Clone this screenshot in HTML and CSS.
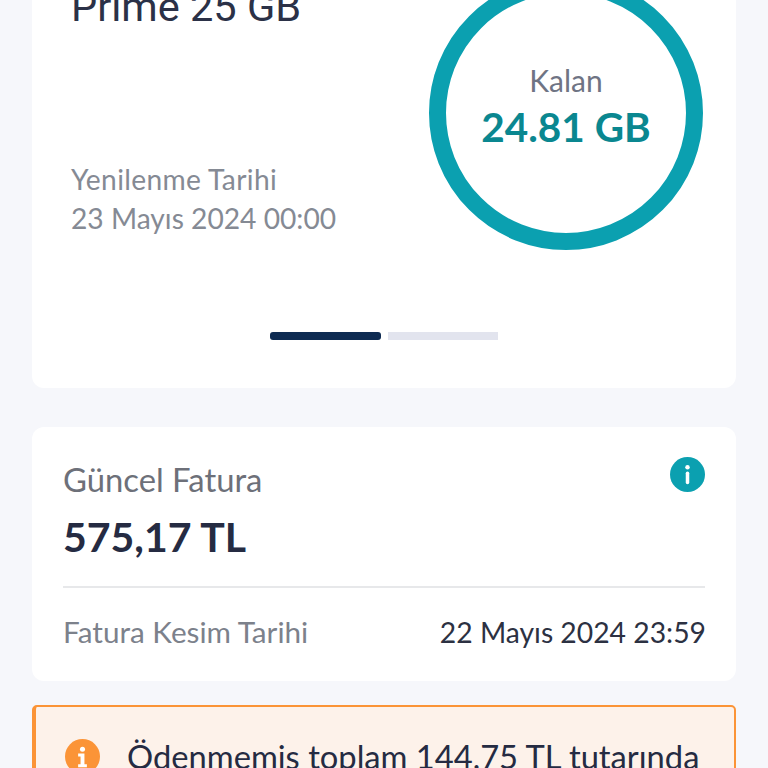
FILE: index.html
```html
<!DOCTYPE html>
<html>
<head>
	<meta charset="utf-8">
	<title>Paketim</title>
	<link rel="stylesheet" href="styles.css">
</head>
<body>
	<div class="screen">
		<div class="list">
			<!-- tarife karti -->
			<div class="card plan">
				<div class="plan-top">
					<div class="plan-info">
						<div class="plan-name">Prime 25 GB</div>
						<div class="plan-date">
							<div class="plan-date-label">Yenilenme Tarihi</div>
							<div>23 Mayıs 2024 00:00</div>
						</div>
					</div>
					<div class="ring">
						<div class="ring-label">Kalan</div>
						<div class="ring-value">24.81 GB</div>
					</div>
				</div>
				<div class="pager">
					<span class="dot active"></span>
					<span class="dot"></span>
				</div>
			</div>

			<!-- fatura karti -->
			<div class="card bill">
				<div class="bill-top">
					<div>
						<div class="bill-label">Güncel Fatura</div>
						<div class="bill-amount">575,17 TL</div>
					</div>
					<svg class="info-icon" viewBox="0 0 36 36">
						<circle cx="18" cy="18" r="18" fill="#0ba0b0"/>
						<circle cx="18" cy="10.5" r="2.3" fill="#fff"/>
						<rect x="16.2" y="15" width="3.6" height="13" rx="1.8" fill="#fff"/>
					</svg>
				</div>
				<div class="bill-row">
					<span class="bill-key">Fatura Kesim Tarihi</span>
					<span class="bill-date">22 Mayıs 2024 23:59</span>
				</div>
			</div>

			<!-- uyari -->
			<div class="alert">
				<svg class="alert-icon" viewBox="0 0 36 36">
					<circle cx="18" cy="18" r="18" fill="#fb9437"/>
					<circle cx="18" cy="10.5" r="2.6" fill="#fff"/>
					<path d="M13.5 15h6.5v11h2.5v3h-9v-3h2.5v-8h-2.5z" fill="#fff"/>
				</svg>
				<div class="alert-text">Ödenmemiş toplam 144,75 TL tutarında</div>
			</div>
		</div>
	</div>
</body>
</html>
```

FILE: styles.css
```css
html,body{
	height:100%;
}
body{
	margin:0;
	background:#f6f7fb;
	font-family:"Lato","Noto Sans",sans-serif;
}
.screen{
	height:768px;
	overflow:hidden;
}
.list{
	margin-top:-40px;
	padding:0 32px;
	display:flex;
	flex-direction:column;
	gap:39px;
}
.card{
	background:#fff;
	border-radius:12px;
}
.plan{
	padding:16px 33px 48px 39px;
}
.plan-top{
	display:flex;
	justify-content:space-between;
}
.plan-name{
	margin-top:7px;
	font-family:"Roboto",sans-serif;
	font-weight:400;
	font-size:41.5px;
	line-height:48px;
	color:#2b3147;
}
.plan-date{
	margin-top:129px;
	font-size:28.2px;
	line-height:39px;
	color:#858a94;
}
.plan-date-label{
	letter-spacing:.35px;
}
.ring{
	width:274px;
	height:274px;
	box-sizing:border-box;
	border:17px solid #0ba0b0;
	border-radius:50%;
	display:flex;
	flex-direction:column;
	align-items:center;
	justify-content:flex-start;
	padding-top:69px;
}
.ring-label{
	font-size:30px;
	line-height:36px;
	color:#6f7484;
}
.ring-value{
	margin-top:5px;
	font-size:40.5px;
	line-height:48px;
	font-weight:700;
	color:#0a8790;
}
.pager{
	margin-top:82px;
	display:flex;
	justify-content:center;
	gap:7px;
	margin-left:-7px;
}
.dot{
	width:110px;
	height:8px;
	background:#e2e4ee;
}
.dot.active{
	width:111px;
	background:#0e2b52;
	border-radius:3px;
}
.bill{
	padding:33px 31px 30px;
}
.bill-top{
	display:flex;
	justify-content:space-between;
	padding-bottom:23px;
	border-bottom:2px solid #e7e8ea;
}
.bill-label{
	font-size:32.8px;
	line-height:40px;
	color:#6d7079;
}
.bill-amount{
	margin-top:11px;
	font-size:41px;
	line-height:52px;
	font-weight:700;
	color:#252b42;
}
.info-icon{
	width:35px;
	height:35px;
	margin-top:-3px;
}
.bill-row{
	margin-top:25px;
	display:flex;
	justify-content:space-between;
	line-height:38px;
}
.bill-key{
	font-size:29.7px;
	color:#7c818b;
}
.bill-date{
	font-size:28.3px;
	color:#2c3142;
	margin-right:-1px;
}
.alert{
	display:flex;
	gap:27px;
	padding:32px 30px 30px 29px;
	margin-top:-15px;
	background:#fdf2ea;
	border:solid #fb9437;
	border-width:2px 2px 2px 4px;
	border-radius:5px;
}
.alert-icon{
	width:35px;
	height:35px;
	flex:none;
}
.alert-text{
	margin-top:-2px;
	font-size:32.7px;
	line-height:40px;
	color:#252b42;
	white-space:nowrap;
}
```
